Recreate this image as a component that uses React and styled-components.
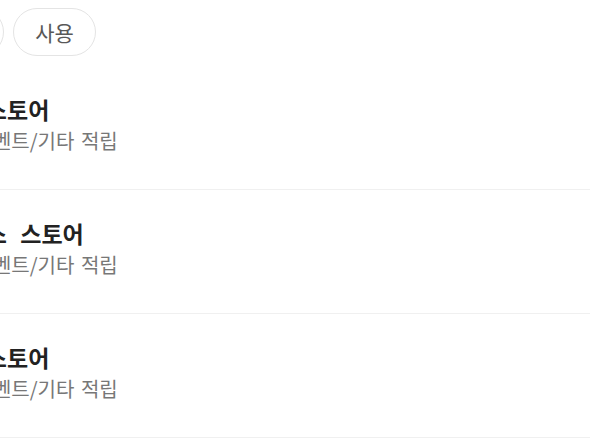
import React from 'react';
import styled, { createGlobalStyle } from 'styled-components';

const GlobalStyle = createGlobalStyle`
    html, body {
        margin: 0;
        padding: 0;
        background: #ffffff;
    }
    body {
        font-family: "Noto Sans CJK KR", "Noto Sans", sans-serif;
    }
`;

const Page = styled.div`
    width: 590px;
    height: 442px;
    overflow: hidden;
    background: #fff;
`;

const ChipBar = styled.div`
    display: flex;
    gap: 9px;
    padding: 8px 0 10px;
    margin-left: ${props => props.offset}px;
`;

const Chip = styled.button`
    flex: none;
    width: 83px;
    height: 48px;
    padding: 0;
    border: 1px solid #e4e4e4;
    border-radius: 24px;
    background: #fff;
    color: #585858;
    font-family: inherit;
    font-size: 21px;
    line-height: 1;
`;

const List = styled.ul`
    list-style: none;
    margin: 0 0 0 ${props => props.offset}px;
    padding: 0;
`;

const Row = styled.li`
    padding: 28px 0 35px;
    border-bottom: 1px solid #f0f0f0;
`;

const Title = styled.div`
    font-size: 23px;
    line-height: 30px;
    font-weight: 700;
    word-spacing: 8px;
    color: #222;
    white-space: nowrap;
`;

const Sub = styled.div`
    margin-top: 4px;
    font-size: 20px;
    line-height: 26px;
    word-spacing: 2px;
    color: #777;
    white-space: nowrap;
`;

const chips = ['전체', '적립', '사용'];

const stores = [
    { name: '롯데마트 스토어', desc: '구매 적립 이벤트/기타 적립' },
    { name: '마켓 플러스 스토어', desc: '구매 적립 이벤트/기타 적립' },
    { name: '이마트몰 스토어', desc: '구매 적립 이벤트/기타 적립' },
];

function App() {
    return (
        <Page>
            <GlobalStyle />
            <ChipBar offset={-171}>
                {chips.map((c) => <Chip key={c}>{c}</Chip>)}
            </ChipBar>
            <List offset={-112}>
                {stores.map((s, num) =>
                    <Row key={num}>
                        <Title>{s.name}</Title>
                        <Sub>{s.desc}</Sub>
                    </Row>
                )}
            </List>
        </Page>
    );
}

export default App;
